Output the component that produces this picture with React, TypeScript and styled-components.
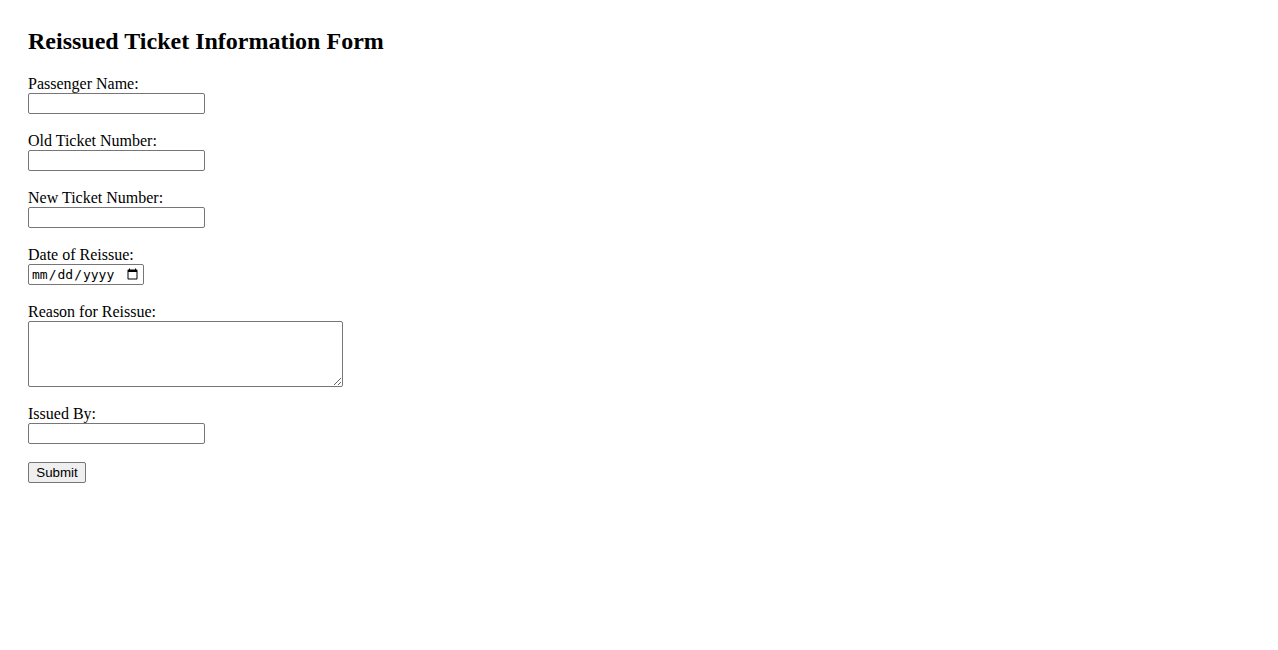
import React from 'react';
import styled, { createGlobalStyle } from 'styled-components';

const GlobalStyle = createGlobalStyle`
    body {
        margin: 0;
        background: #ffffff;
        color: #000000;
        font-family: "Liberation Serif", "Times New Roman", serif;
        font-size: 16px;
    }
`;

const Page = styled.div`
    padding: 28px;
`;

const Title = styled.h2`
    font-size: 24px;
    font-weight: bold;
    margin: 0 0 19.92px;
    line-height: normal;
`;

const Form = styled.form`
    display: flex;
    flex-direction: column;
    align-items: flex-start;
`;

const Field = styled.div`
    display: flex;
    flex-direction: column;
    align-items: flex-start;
    margin-bottom: 18px;
`;

const Label = styled.label`
    display: block;
    line-height: 18px;
`;

const TextInput = styled.input`
    box-sizing: border-box;
    width: 177px;
    height: 21px;
    margin: 0;
    padding: 1px 2px;
    border: 1px solid #767676;
    border-radius: 2px;
    font-family: "Liberation Sans", Arial, sans-serif;
    font-size: 13.33px;
`;

const DateInput = styled(TextInput)`
    width: 116px;
    font-family: "DejaVu Sans Mono", "Liberation Mono", monospace;
    font-size: 13px;
`;

const TextArea = styled.textarea`
    box-sizing: border-box;
    width: 315px;
    height: 66px;
    margin: 0;
    padding: 2px;
    border: 1px solid #767676;
    border-radius: 2px;
    font-family: "Liberation Mono", monospace;
    font-size: 13.33px;
`;

const SubmitButton = styled.button`
    box-sizing: border-box;
    width: 58px;
    height: 21px;
    margin: 0;
    padding: 1px 6px;
    border: 1px solid #767676;
    border-radius: 2px;
    background: #efefef;
    color: #000000;
    font-family: "Liberation Sans", Arial, sans-serif;
    font-size: 13.33px;
`;

const fields = [
    { id: 'passengerName', label: 'Passenger Name:' },
    { id: 'oldTicket', label: 'Old Ticket Number:' },
    { id: 'newTicket', label: 'New Ticket Number:' },
];

export default function App() {
    return (
        <>
            <GlobalStyle />
            <Page>
                <Title>Reissued Ticket Information Form</Title>
                <Form onSubmit={(e) => e.preventDefault()}>
                    {fields.map((f) => (
                        <Field key={f.id}>
                            <Label htmlFor={f.id}>{f.label}</Label>
                            <TextInput id={f.id} type="text" />
                        </Field>
                    ))}
                    <Field>
                        <Label htmlFor="reissueDate">Date of Reissue:</Label>
                        <DateInput id="reissueDate" type="date" />
                    </Field>
                    <Field>
                        <Label htmlFor="reason">Reason for Reissue:</Label>
                        <TextArea id="reason" />
                    </Field>
                    <Field>
                        <Label htmlFor="issuedBy">Issued By:</Label>
                        <TextInput id="issuedBy" type="text" />
                    </Field>
                    <SubmitButton type="submit">Submit</SubmitButton>
                </Form>
            </Page>
        </>
    );
}
